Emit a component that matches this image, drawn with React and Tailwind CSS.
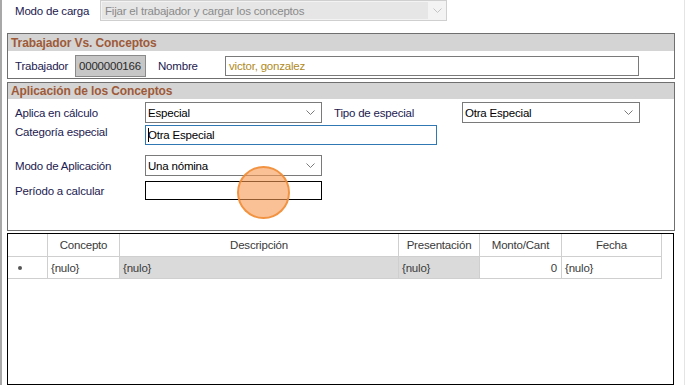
import React from "react";

const Chevron = () => (
  <svg width="9" height="6" viewBox="0 0 9 6" className="shrink-0">
    <polyline points="0.5,0.5 4.5,4.5 8.5,0.5" fill="none" stroke="#7a7a7a" strokeWidth="1" />
  </svg>
);

const Combo = ({ w, value }) => (
  <div className={`flex items-center justify-between h-full border border-[#7a7a7a] bg-white pl-[2px] pr-[6px] ${w}`}>
    <span className="text-black">{value}</span>
    <Chevron />
  </div>
);

const Label = ({ children, w }) => (
  <div className={`text-[#1c2050] ${w}`}>{children}</div>
);

export default function App() {
  return (
    <div
      className="w-[688px] h-[385px] bg-white overflow-hidden flex text-[11.5px] leading-[14px] tracking-[-0.2px]"
      style={{ fontFamily: '"Liberation Sans", Arial, sans-serif' }}
    >
      <div className="w-[2px] bg-[#a8a8a8] shrink-0" />
      <div className="w-[682px] shrink-0 flex flex-col pl-[5px] relative">
        {/* Modo de carga */}
        <div className="flex items-center h-[21px]">
          <div className="w-[93px] pl-[8px] text-[#1c2050]">Modo de carga</div>
          <div className="w-[347px] h-full border border-[#cfcfcf] bg-[#f3f3f3] flex items-center">
            <div className="flex-1 h-[17px] ml-[1px] bg-[#e6e6e6] flex items-center pl-[3px] text-[#8a8a8a]">
              Fijar el trabajador y cargar los conceptos
            </div>
            <div className="w-[18px] flex justify-center">
              <svg width="9" height="6" viewBox="0 0 9 6">
                <polyline points="0.5,0.5 4.5,4.5 8.5,0.5" fill="none" stroke="#c4c4c4" strokeWidth="1" />
              </svg>
            </div>
          </div>
        </div>

        {/* Trabajador Vs. Conceptos */}
        <div className="mt-[12px] w-[668px] h-[46px] border border-[#6f6f6f] flex flex-col">
          <div className="h-[17px] bg-[#d4d4d4] pl-[3px] flex items-center font-bold text-[#9e5a38] text-[12px] tracking-[-0.1px]">
            Trabajador Vs. Conceptos
          </div>
          <div className="flex items-center h-[22px] mt-[4px]">
            <Label w="w-[67px] pl-[7px]">Trabajador</Label>
            <div className="w-[71px] h-full border border-[#8a8a8a] bg-[#c6c6c6] flex items-center pl-[3px] text-[#2a2a2a]">
              0000000166
            </div>
            <Label w="w-[79px] pl-[12px]">Nombre</Label>
            <div className="w-[414px] h-[20px] border border-[#7a7a7a] bg-white flex items-center pl-[3px] text-[#b08a24]">
              victor, gonzalez
            </div>
          </div>
        </div>

        {/* Aplicación de los Conceptos */}
        <div className="mt-[3px] w-[668px] h-[149px] border border-[#6f6f6f] flex flex-col">
          <div className="h-[16px] bg-[#d4d4d4] pl-[3px] flex items-center font-bold text-[#9e5a38] text-[12px] tracking-[-0.1px]">
            Aplicación de los Conceptos
          </div>
          <div className="flex items-center h-[21px] mt-[3px]">
            <Label w="w-[137px] pl-[7px]">Aplica en cálculo</Label>
            <Combo w="w-[177px]" value="Especial" />
            <Label w="w-[140px] pl-[12px]">Tipo de especial</Label>
            <Combo w="w-[178px]" value="Otra Especial" />
          </div>
          <div className="flex items-start h-[20px] mt-[2px]">
            <Label w="w-[137px] pl-[7px]">Categoría especial</Label>
            <div className="w-[292px] h-full border border-[#2f78b4] bg-white flex items-center pl-[2px] text-black">
              <span className="relative">
                Otra Especial
                <span className="absolute left-[0px] top-[0px] w-[1px] h-[14px] bg-black" />
              </span>
            </div>
          </div>
          <div className="flex items-center h-[21px] mt-[10px]">
            <Label w="w-[137px] pl-[7px]">Modo de Aplicación</Label>
            <Combo w="w-[177px]" value="Una nómina" />
          </div>
          <div className="flex items-center h-[19px] mt-[5px]">
            <Label w="w-[137px] pl-[7px]">Período a calcular</Label>
            <div className="w-[177px] h-full border border-black bg-white" />
          </div>
        </div>

        {/* Grid */}
        <div className="mt-[2px] w-[667px] flex-1 border border-black bg-white flex flex-col text-[#3a3a3a]">
          <div className="flex h-[23px]">
            <div className="w-[40px] border-r border-b border-[#cfcfcf]" />
            <div className="w-[72px] border-r border-b border-[#cfcfcf] flex items-center justify-center">Concepto</div>
            <div className="w-[279px] border-r border-b border-[#cfcfcf] flex items-center justify-center">Descripción</div>
            <div className="w-[81px] border-r border-b border-[#cfcfcf] flex items-center justify-center">Presentación</div>
            <div className="w-[82px] border-r border-b border-[#cfcfcf] flex items-center justify-center">Monto/Cant</div>
            <div className="w-[100px] border-r border-b border-[#cfcfcf] flex items-center justify-center">Fecha</div>
          </div>
          <div className="flex h-[22px]">
            <div className="w-[40px] border-r border-b border-[#cfcfcf] flex items-center pl-[10px]">
              <span className="w-[4px] h-[4px] rounded-full bg-[#555]" />
            </div>
            <div className="w-[72px] border-r border-b border-[#cfcfcf] flex items-center pl-[3px]">{"{nulo}"}</div>
            <div className="w-[279px] border-r border-b border-[#cfcfcf] bg-[#dadada] flex items-center pl-[3px]">{"{nulo}"}</div>
            <div className="w-[81px] border-r border-b border-[#cfcfcf] bg-[#dadada] flex items-center pl-[3px]">{"{nulo}"}</div>
            <div className="w-[82px] border-r border-b border-[#cfcfcf] flex items-center justify-end pr-[4px]">0</div>
            <div className="w-[100px] border-r border-b border-[#cfcfcf] flex items-center pl-[3px]">{"{nulo}"}</div>
          </div>
        </div>

        {/* highlight circle overlay */}
        <div className="absolute left-[235px] top-[166px] w-[53px] h-[53px] rounded-full bg-[rgba(247,150,80,0.6)] border-2 border-[rgba(240,140,50,0.85)]" />
      </div>
      <div className="w-[1px] bg-[#e4e4e4] shrink-0" />
    </div>
  );
}
